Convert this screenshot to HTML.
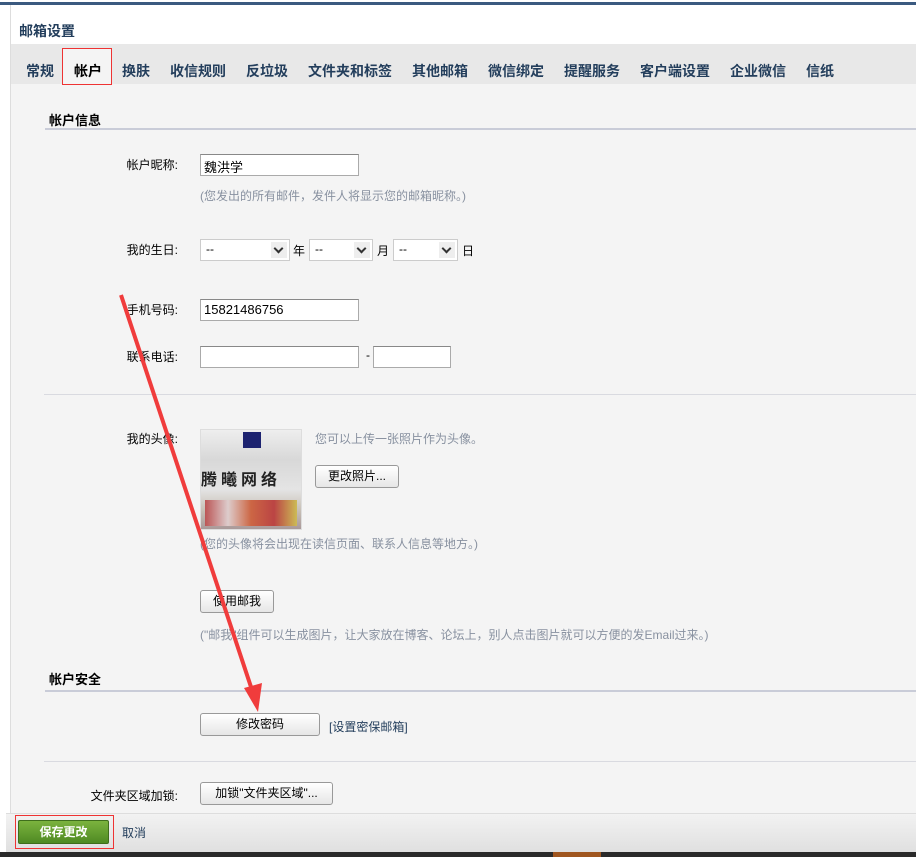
<!DOCTYPE html>
<html><head><meta charset="utf-8"><style>
*{margin:0;padding:0;box-sizing:border-box}
body{width:916px;height:857px;overflow:hidden;background:#fff;font-family:"Liberation Sans","Noto Sans CJK SC",sans-serif;font-size:12px;color:#000;position:relative}
.a{position:absolute;white-space:nowrap}
.inp{position:absolute;background:#fff;border:1px solid #aaa;border-top-color:#888;height:22px;font-size:13px;padding:2px 3px}
.btn{position:absolute;border:1px solid #999;border-radius:3px;background:linear-gradient(#fff,#e6e6e6);text-align:center;font-size:12px;height:23px;line-height:21px}
.sel{position:absolute;background:#fff;border:1px solid #ccc;height:22px}
.sel span{position:absolute;left:5px;top:2px;font-size:12px}
.sel i{position:absolute;right:2px;top:2px;width:16px;height:16px;background:#eee}
.sel i:after{content:"";position:absolute;left:4px;top:3px;width:5px;height:5px;border-right:2px solid #333;border-bottom:2px solid #333;transform:rotate(45deg)}
.tab{position:absolute;top:61px;font-size:14px;font-weight:bold;color:#233e5c}
.gray{color:#8891a0}
.lab{position:absolute;text-align:right;width:90px;left:88px}
.hr{position:absolute;left:44px;right:0;height:1px;background:#d9dae0}
</style></head><body>
<div class="a" style="left:0;top:2px;width:916px;height:3px;background:#3b5a80"></div>
<div class="a" style="left:10px;top:5px;width:1px;height:810px;background:#ddd"></div>
<div class="a" style="left:19px;top:21px;font-size:14px;font-weight:bold;color:#233e5c">邮箱设置</div>
<div class="a" style="left:11px;top:44px;width:905px;height:40px;background:#e8e8e8"></div>
<div class="a" style="left:11px;top:84px;width:905px;height:730px;background:#f4f4f4"></div>
<div class="a" style="left:62px;top:48px;width:50px;height:37px;background:#f4f4f4;border:1px solid #e33"></div>
<div class="tab" style="left:26px">常规</div>
<div class="tab" style="left:74px;color:#000">帐户</div>
<div class="tab" style="left:122px">换肤</div>
<div class="tab" style="left:170px">收信规则</div>
<div class="tab" style="left:246px">反垃圾</div>
<div class="tab" style="left:308px">文件夹和标签</div>
<div class="tab" style="left:412px">其他邮箱</div>
<div class="tab" style="left:488px">微信绑定</div>
<div class="tab" style="left:564px">提醒服务</div>
<div class="tab" style="left:640px">客户端设置</div>
<div class="tab" style="left:730px">企业微信</div>
<div class="tab" style="left:806px">信纸</div>

<div class="a" style="left:49px;top:110px;font-size:13px;font-weight:bold">帐户信息</div>
<div class="a" style="left:45px;top:128px;width:871px;height:2px;background:#c9ccd8"></div>

<div class="lab" style="top:156px">帐户昵称:</div>
<div class="inp" style="left:200px;top:154px;width:159px">魏洪学</div>
<div class="a gray" style="left:200px;top:187px">(您发出的所有邮件，发件人将显示您的邮箱昵称。)</div>

<div class="lab" style="top:241px">我的生日:</div>
<div class="sel" style="left:200px;top:239px;width:90px"><span>--</span><i></i></div>
<div class="a" style="left:293px;top:242px">年</div>
<div class="sel" style="left:309px;top:239px;width:64px"><span>--</span><i></i></div>
<div class="a" style="left:377px;top:242px">月</div>
<div class="sel" style="left:393px;top:239px;width:65px"><span>--</span><i></i></div>
<div class="a" style="left:462px;top:242px">日</div>

<div class="lab" style="top:301px">手机号码:</div>
<div class="inp" style="left:200px;top:299px;width:159px">15821486756</div>
<div class="lab" style="top:348px">联系电话:</div>
<div class="inp" style="left:200px;top:346px;width:159px"></div>
<div class="a" style="left:366px;top:348px">-</div>
<div class="inp" style="left:373px;top:346px;width:78px"></div>

<div class="hr" style="top:394px"></div>

<div class="lab" style="top:430px">我的头像:</div>
<div class="a" style="left:200px;top:429px;width:102px;height:101px;background:linear-gradient(#eee 0,#d8d8d8 30%,#e4e4e4 60%,#c9c2b8 80%,#a99 100%);border:1px solid #ddd">
<div class="a" style="left:42px;top:2px;width:18px;height:16px;background:#1d2370"></div>
<div class="a" style="left:0;top:36px;font-size:16px;font-weight:bold;color:#222;letter-spacing:4px">腾曦网络</div>
<div class="a" style="left:4px;top:70px;width:92px;height:26px;background:linear-gradient(90deg,#b55,#dcc,#c64,#b44,#cb5)"></div>
</div>
<div class="a gray" style="left:315px;top:430px">您可以上传一张照片作为头像。</div>
<div class="btn" style="left:315px;top:465px;width:84px">更改照片...</div>
<div class="a gray" style="left:200px;top:535px">(您的头像将会出现在读信页面、联系人信息等地方。)</div>

<div class="btn" style="left:200px;top:590px;width:74px">使用邮我</div>
<div class="a gray" style="left:200px;top:626px">("邮我"组件可以生成图片，让大家放在博客、论坛上，别人点击图片就可以方便的发Email过来。)</div>

<div class="a" style="left:49px;top:669px;font-size:13px;font-weight:bold">帐户安全</div>
<div class="a" style="left:45px;top:690px;width:871px;height:2px;background:#c9ccd8"></div>
<div class="btn" style="left:200px;top:713px;width:120px">修改密码</div>
<div class="a" style="left:329px;top:718px;color:#233e5c">[设置密保邮箱]</div>

<div class="hr" style="top:761px"></div>
<div class="lab" style="top:787px;left:60px;width:118px">文件夹区域加锁:</div>
<div class="btn" style="left:200px;top:782px;width:133px">加锁"文件夹区域"...</div>

<div class="a" style="left:6px;top:813px;width:910px;height:39px;background:linear-gradient(#f2f2f2,#e0e0e0);border-top:1px solid #ddd"></div>
<div class="a" style="left:15px;top:815px;width:99px;height:34px;border:1px solid #e33"></div>
<div class="a" style="left:18px;top:820px;width:91px;height:24px;background:linear-gradient(#7bb33e,#4f8a23);border:1px solid #3f6e1c;border-radius:2px;color:#fff;font-weight:bold;text-align:center;line-height:22px">保存更改</div>
<div class="a" style="left:122px;top:824px;color:#233e5c">取消</div>
<div class="a" style="left:0;top:852px;width:916px;height:5px;background:#2a2a2a"></div>
<div class="a" style="left:553px;top:852px;width:48px;height:5px;background:#a0561f"></div>

<svg class="a" style="left:0;top:0" width="916" height="857">
<line x1="121" y1="295" x2="252" y2="690" stroke="#f03c3c" stroke-width="4"/>
<polygon points="258,712 244,688 262,683" fill="#f03c3c"/>
</svg>
</body></html>
